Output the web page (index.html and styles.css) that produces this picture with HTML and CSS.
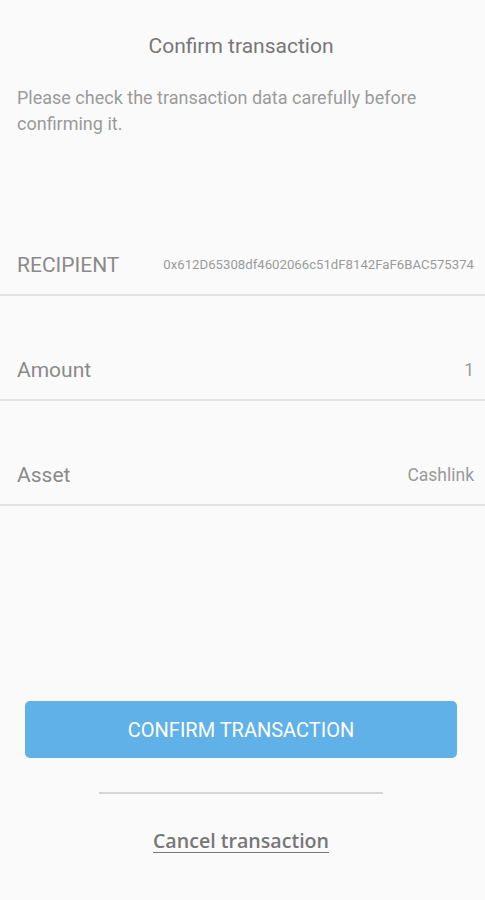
FILE: index.html
```html
<!DOCTYPE html>
<html lang="en">
<head>
  <meta charset="UTF-8">
  <title>Confirm transaction</title>
  <link rel="stylesheet" href="styles.css">
</head>
<body>
<div class="pantalla">
  <h1 class="titulo">Confirm transaction</h1>
  <p class="aviso">Please check the transaction data carefully before confirming it.</p>

  <div class="datos">
    <div class="fila primera">
      <span class="etiqueta">RECIPIENT</span>
      <span class="valor direccion">0x612D65308df4602066c51dF8142FaF6BAC575374</span>
    </div>
    <div class="fila">
      <span class="etiqueta">Amount</span>
      <span class="valor">1</span>
    </div>
    <div class="fila">
      <span class="etiqueta">Asset</span>
      <span class="valor">Cashlink</span>
    </div>
  </div>

  <div class="acciones">
    <button class="btnConfirmar">CONFIRM TRANSACTION</button>
    <div class="separador"></div>
    <a class="cancelar" href="#">Cancel transaction</a>
  </div>
</div>
</body>
</html>
```

FILE: styles.css
```css
body {
  margin: 0;
  padding: 0;
  background-color: #fafafa;
  font-family: Roboto, "Liberation Sans", sans-serif;
}

.pantalla {
  height: 900px;
  display: flex;
  flex-direction: column;
}

.titulo {
  margin: 33px 0 0;
  padding-right: 3px;
  text-align: center;
  font-size: 21px;
  font-weight: normal;
  color: #777;
  line-height: 26px;
}

.aviso {
  margin: 26px 60px 0 17px;
  font-size: 18px;
  line-height: 26px;
  color: #9a9a9a;
}

.datos {
  margin-top: 91px;
}

.fila {
  display: flex;
  justify-content: space-between;
  align-items: flex-end;
  box-sizing: border-box;
  height: 105px;
  padding: 0 11px 17px 17px;
  border-bottom: 2px solid #e3e3e3;
}

.fila.primera {
  height: 68px;
}

.etiqueta {
  font-size: 21px;
  line-height: 24px;
  color: #8a8a8a;
}

.valor {
  font-size: 17.5px;
  line-height: 24px;
  color: #9a9a9a;
}

.direccion {
  font-size: 13.2px;
}

.acciones {
  margin-top: auto;
  margin-bottom: 46px;
  padding-right: 3px;
  display: flex;
  flex-direction: column;
  align-items: center;
}

.btnConfirmar {
  width: 432px;
  height: 57px;
  border: none;
  border-radius: 5px;
  background-color: #5fb1e8;
  color: #fff;
  font-family: Roboto, "Liberation Sans", sans-serif;
  font-size: 20px;
  padding-top: 2px;
  cursor: pointer;
}

.separador {
  width: 284px;
  height: 2px;
  background-color: #d6d6d6;
  margin-top: 34px;
}

.cancelar {
  margin-top: 33px;
  font-family: "Open Sans", sans-serif;
  font-weight: 600;
  font-size: 19.6px;
  color: #777;
  text-decoration: underline;
  text-underline-offset: 4px;
}
```
